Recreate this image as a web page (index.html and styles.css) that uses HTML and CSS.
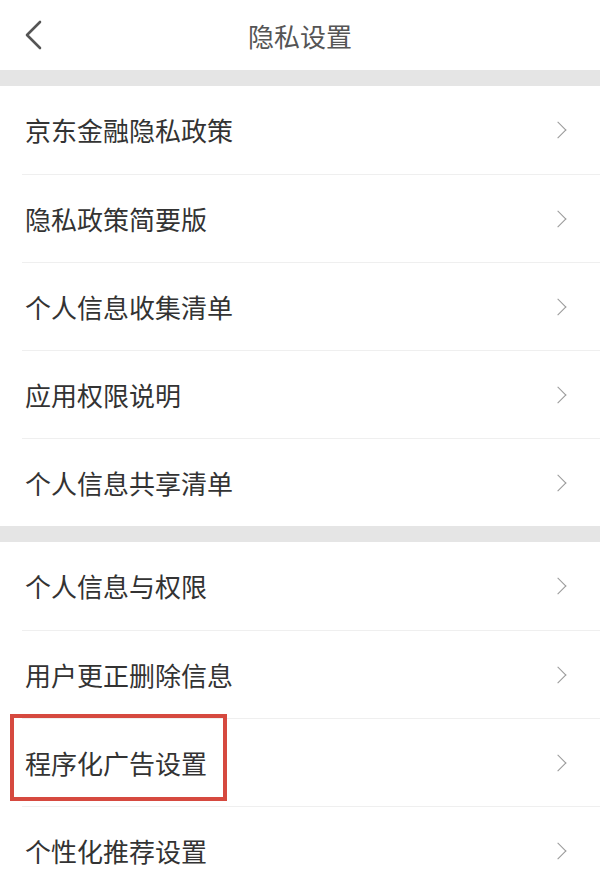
FILE: index.html
```html
<!DOCTYPE html>
<html lang="zh-CN">
<head>
    <meta charset="UTF-8">
    <meta name="viewport" content="width=device-width, initial-scale=1.0">
    <title>隐私设置</title>
    <link rel="stylesheet" href="styles.css">
</head>
<body>

    <!-- Top bar -->
    <div class="top-bar">
        <div class="back">
            <svg width="20" height="30" viewBox="0 0 20 30">
                <polyline points="16,2 3,15 16,28" fill="none" stroke="#555" stroke-width="2.6" stroke-linecap="round" stroke-linejoin="round"/>
            </svg>
        </div>
        <div class="title">隐私设置</div>
    </div>

    <div class="gap"></div>

    <!-- Policies -->
    <div class="group">
        <div class="item"><span>京东金融隐私政策</span><i class="arrow"></i></div>
        <div class="item"><span>隐私政策简要版</span><i class="arrow"></i></div>
        <div class="item"><span>个人信息收集清单</span><i class="arrow"></i></div>
        <div class="item"><span>应用权限说明</span><i class="arrow"></i></div>
        <div class="item"><span>个人信息共享清单</span><i class="arrow"></i></div>
    </div>

    <div class="gap"></div>

    <!-- Settings -->
    <div class="group">
        <div class="item"><span>个人信息与权限</span><i class="arrow"></i></div>
        <div class="item"><span>用户更正删除信息</span><i class="arrow"></i></div>
        <div class="item marked"><span>程序化广告设置</span><i class="arrow"></i></div>
        <div class="item"><span>个性化推荐设置</span><i class="arrow"></i></div>
    </div>

</body>
</html>
```

FILE: styles.css
```css
* {
    margin: 0;
    padding: 0;
    box-sizing: border-box;
}

body {
    font-family: "Noto Sans CJK SC", "Noto Sans", sans-serif;
    background-color: #fff;
    color: #333;
    height: 891px;
    overflow: hidden;
}

/* Top bar */
.top-bar {
    height: 70px;
    position: relative;
    display: flex;
    align-items: center;
    justify-content: center;
}

.back {
    position: absolute;
    left: 24px;
    top: 20px;
    width: 20px;
    height: 30px;
}

.title {
    font-size: 26px;
    color: #555;
    line-height: 1;
    margin-top: 2px;
}

.gap {
    height: 16px;
    background-color: #e5e5e5;
}

/* List rows */
.item {
    position: relative;
    height: 88px;
    margin-left: 22px;
    padding: 0 32px 0 3px;
    display: flex;
    align-items: center;
    justify-content: space-between;
    font-size: 26px;
    color: #333;
}

.item + .item {
    border-top: 1px solid #efefef;
}

.item span {
    line-height: 1;
}

.arrow {
    width: 12px;
    height: 12px;
    border-top: 1.6px solid #9a9a9a;
    border-right: 1.6px solid #9a9a9a;
    transform: rotate(45deg);
    margin-right: 4px;
}

/* Red annotation box */
.marked::after {
    content: "";
    position: absolute;
    z-index: 1;
    left: -12px;
    top: -5px;
    width: 217px;
    height: 87px;
    box-sizing: border-box;
    border: 4px solid #d6493f;
}
```
